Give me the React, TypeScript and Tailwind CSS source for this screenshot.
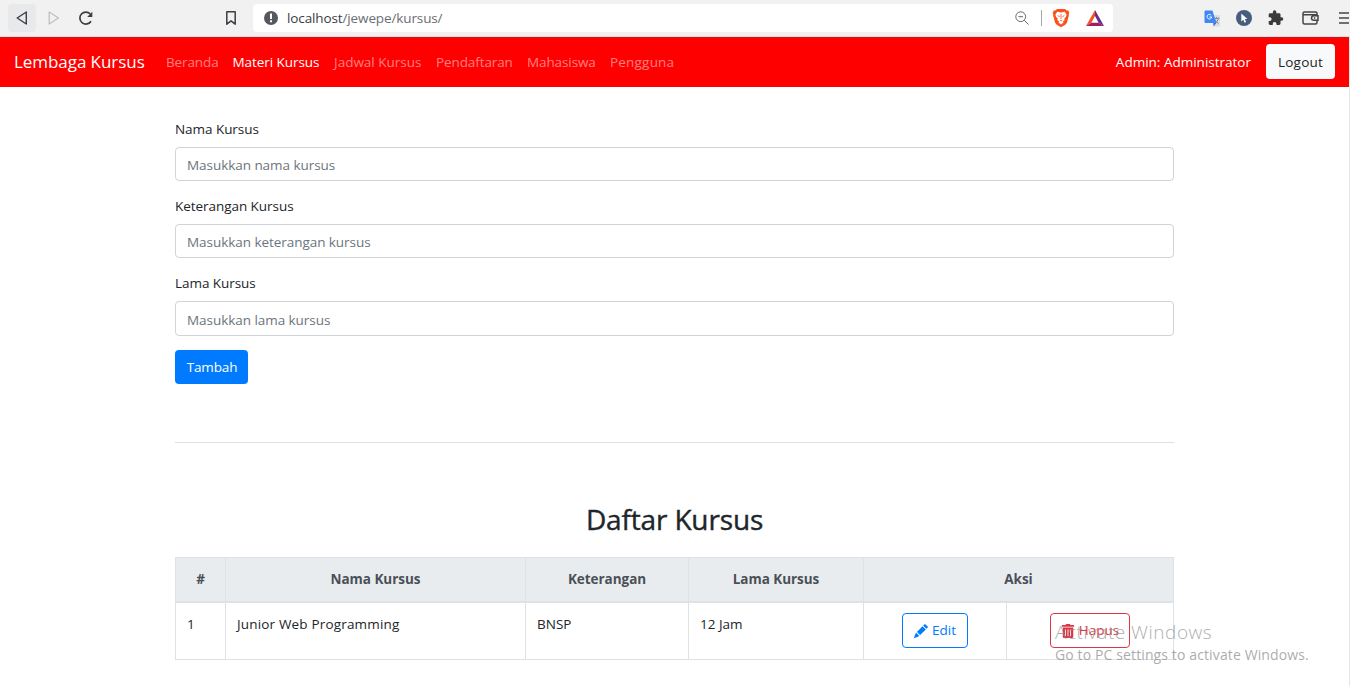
import React from "react";
import { BsPencilFill } from "react-icons/bs";
import { FaTrashAlt } from "react-icons/fa";

function BrowserBar() {
  return (
    <header className="flex h-[37px] items-start border-b border-[#e6dcdc] bg-[#f1f1f1] pt-1">
      <div className="ml-2 flex h-7 w-7 items-center justify-center rounded bg-[#e8e9eb]">
        <svg width="16" height="16" viewBox="0 0 16 16" fill="none" stroke="#3b3e44" strokeWidth="1.4" strokeLinejoin="round"><path d="M12.3 2v12L3.2 8z" /></svg>
      </div>
      <div className="ml-1 flex h-7 w-7 items-center justify-center">
        <svg width="16" height="16" viewBox="0 0 16 16" fill="none" stroke="#bfc0c2" strokeWidth="1.3" strokeLinejoin="round"><path d="M3.2 2v12l9.3-6z" /></svg>
      </div>
      <div className="ml-1 flex h-7 w-7 items-center justify-center">
        <svg width="16" height="16" viewBox="0 0 16 16" fill="none" stroke="#3b3e44" strokeWidth="1.7"><path d="M13 11.2A6 6 0 1 1 12.3 4" /><path d="M14.3 1.8v5.1H9.2z" fill="#3b3e44" stroke="none" /></svg>
      </div>
      <div className="ml-[117px] flex h-7 w-7 items-center justify-center">
        <svg width="16" height="16" viewBox="0 0 16 16" fill="none" stroke="#3b3e44" strokeWidth="1.5" strokeLinejoin="round"><path d="M3.8 1.8h8.4v12.4L8 10.9l-4.2 3.3z" /></svg>
      </div>
      <div className="ml-2 flex h-7 w-[860px] items-center rounded bg-white">
        <svg className="ml-[11px]" width="14" height="14" viewBox="0 0 14 14"><circle cx="7" cy="7" r="7" fill="#55585d" /><path d="M6 2.6h2v5.4H6zM6 9.3h2v2H6z" fill="#fff" /></svg>
        <span className="ml-[9px] text-[13.5px] leading-5 tracking-[-0.12px] text-[#6b6e73]"><span className="text-[#3b3e44]">localhost</span>/jewepe/kursus/</span>
        <svg className="ml-auto" width="14" height="14" viewBox="0 0 14 14" fill="none" stroke="#65686d" strokeWidth="1"><circle cx="5.7" cy="5.7" r="4.9" /><path d="M9.3 9.3l4.2 4.2M3.4 5.7H8" /></svg>
        <div className="ml-3 h-4 w-px bg-[#a5a7ab]" />
        <svg className="ml-[10px]" width="18" height="20" viewBox="0 0 18 20"><path d="M5 1h8l1.7 1.6 1.6-.2 1 2.6-.6 1.5.2 1-2 7.3-1.6 2L9 19.3 4.7 16.800l-1.600-2-2-7.300.200-1L.7 5l1-2.600 1.600.200z" fill="#f9531d" /><path d="M5.300 3.800L9 4.500l3.700-.7 1.900 3-.8 2.200-1.500 1.600.4 1.400-1.800 1.200.6 1.300L9 16.400l-2.500-1.900.600-1.300L5.300 12l.4-1.400L4.200 9l-.8-2.200z" fill="#fff" /><path d="M5 7.200l2.900.8-.7 1.100zM13 7.200l-2.900.8.7 1.100zM7.300 11.500L9 12.300l1.700-.8L9 13.400zM8.600 6h.8v5h-.8z" fill="#f9531d" /></svg>
        <svg className="ml-4 mr-[9px]" width="18" height="16" viewBox="0 0 18 16"><path d="M9 0L0 16l5.400-3.300L9 6z" fill="#f9531d" /><path d="M0 16h18l-5.400-3.300H5.400z" fill="#9e1f63" /><path d="M9 0v6l3.600 6.700L18 16z" fill="#662d91" /></svg>
      </div>
      <div className="ml-[91px] flex h-7 items-center">
        <svg width="17" height="17" viewBox="0 0 17 17"><path d="M5.500 5H15a1 1 0 0 1 1 1v9.500a1 1 0 0 1-1 1H9.500z" fill="#dadde2" /><path d="M9.700 8.300h5.800M12.500 7v1.300M14.500 8.500q-1 3.500-4 5M11 9.500q1 2.500 3.500 4" stroke="#7c8793" fill="none" /><path d="M1.500.5h7L12.300 13h-10.800a1 1 0 0 1-1-1V1.500a1 1 0 0 1 1-1z" fill="#4285f4" /><path d="M9.500 13h2.800l-2.800 3.500z" fill="#3367d6" /><path d="M7.200 5.200A2.300 2.300 0 1 0 7.700 7H5.500" stroke="#fff" fill="none" /></svg>
        <svg className="ml-[15px]" width="16" height="16" viewBox="0 0 16 16"><circle cx="8" cy="8" r="8" fill="#475d7c" /><path d="M5.300 3.500v8l2-1.800 1.300 3 1.500-.7-1.300-2.900h2.600z" fill="#fff" /></svg>
        <svg className="ml-4" width="16" height="16" viewBox="1 1 23 22" fill="#3b3b3d"><path d="M20.500 11H19V7c0-1.100-.9-2-2-2h-4V3.500a2.500 2.500 0 0 0-5 0V5H4c-1.100 0-2 .9-2 2v3.800h1.500a2.700 2.700 0 0 1 0 5.400H2V20c0 1.100.9 2 2 2h3.800v-1.500a2.700 2.700 0 0 1 5.400 0V22H17c1.100 0 2-.9 2-2v-4h1.500a2.500 2.500 0 0 0 0-5z" /></svg>
        <svg className="ml-[18px]" width="17" height="14" viewBox="0 0 17 14" fill="none" stroke="#444548" strokeWidth="1.500"><path d="M15 4V2.500a1.500 1.500 0 0 0-1.500-1.500h-11A1.500 1.500 0 0 0 1 2.500v9A1.500 1.500 0 0 0 2.500 13h11a1.500 1.500 0 0 0 1.500-1.500V10M1 3.700h14M16 4.700v4.600h-4.200a2.300 2.300 0 0 1 0-4.600z" /><path d="M11.800 7h1.500" /></svg>
        <svg className="ml-5" width="10" height="12" viewBox="0 0 10 12" fill="none" stroke="#444548" strokeWidth="1.600"><path d="M0 1h10M0 6h10M0 11h10" /></svg>
      </div>
    </header>
  );
}

const links = [
  { label: "Beranda", cls: "w-[66.5px] text-white/50 tracking-[-0.12px]" },
  { label: "Materi Kursus", cls: "w-[101.5px] text-white tracking-[-0.06px]" },
  { label: "Jadwal Kursus", cls: "w-[102px] text-white/50" },
  { label: "Pendaftaran", cls: "w-[91px] text-white/50 tracking-[-0.1px]" },
  { label: "Mahasiswa", cls: "w-[83px] text-white/50 tracking-[-0.1px]" },
  { label: "Pengguna", cls: "w-[80px] text-white/50 tracking-[0.2px]" },
];

function Navbar() {
  return (
    <nav className="flex h-[50px] w-[1349px] items-center border-t border-[#d51515] bg-[#ff0000] pb-px text-[13.5px]">
      <a className="ml-[14px] w-[152px] whitespace-nowrap text-[17px] tracking-[-0.06px] text-white">Lembaga Kursus</a>
      {links.map((l) => (
        <a key={l.label} className={"whitespace-nowrap " + l.cls}>{l.label}</a>
      ))}
      <span className="ml-auto mr-[15px] whitespace-nowrap text-white">Admin: Administrator</span>
      <button className="mr-[14px] mb-px h-[35px] w-[69px] rounded-[4px] bg-[#f8f9fa] pt-px text-[#212529] tracking-[0.2px]">Logout</button>
    </nav>
  );
}

const fields = [
  { label: "Nama Kursus", placeholder: "Masukkan nama kursus", gap: "mb-[14px]", input: "h-[34px] pt-[2px]" },
  { label: "Keterangan Kursus", placeholder: "Masukkan keterangan kursus", gap: "mb-[14px]", input: "h-[34px] pt-[2px]" },
  { label: "Lama Kursus", placeholder: "Masukkan lama kursus", gap: "mb-[14px]", input: "h-[35px] pt-[3px]" },
];

function CourseForm() {
  return (
    <form className="flex flex-col items-start">
      {fields.map((f) => (
        <div key={f.label} className={"w-full tracking-[-0.05px] " + f.gap}>
          <label className="mb-[7px] block h-[22px] pt-px leading-[21.6px]">{f.label}</label>
          <input placeholder={f.placeholder} className={"block w-full rounded-[4px] border border-[#ced4da] bg-white px-[11px] placeholder:text-[#6c757d] placeholder:opacity-100 " + f.input} />
        </div>
      ))}
      <button type="button" className="h-[34px] w-[73px] rounded-[4px] bg-[#007bff] pl-px text-white tracking-[-0.15px]">Tambah</button>
    </form>
  );
}

const cell = "border border-[#dee2e6] px-[11px] ";
const headCell = cell + "border-b-2 pb-px tracking-[-0.04px]";

function CourseTable() {
  return (
    <table className="w-[999px] table-fixed border-collapse">
      <colgroup>
        <col className="w-[50px]" /><col className="w-[300px]" /><col className="w-[163px]" />
        <col className="w-[175px]" /><col className="w-[143px]" /><col className="w-[167px]" />
      </colgroup>
      <thead>
        <tr className="h-[44px] bg-[#e9ecef] text-center font-bold text-[#495057]">
          <th className={headCell}>#</th>
          <th className={headCell}>Nama Kursus</th>
          <th className={headCell}>Keterangan</th>
          <th className={headCell}>Lama Kursus</th>
          <th colSpan={2} className={headCell}>Aksi</th>
        </tr>
      </thead>
      <tbody>
        <tr className="h-[58px] align-top leading-[21.6px]">
          <td className={cell + "pt-[11px]"}>1</td>
          <td className={cell + "pt-[11px] tracking-[0.17px]"}>Junior Web Programming</td>
          <td className={cell + "pt-[11px]"}>BNSP</td>
          <td className={cell + "pt-[11px]"}>12 Jam</td>
          <td className={cell + "pt-[10px]"}>
            <button className="mx-auto flex h-[35px] w-[66px] items-center justify-center gap-1 rounded-[4px] border border-[#007bff] pt-px text-[#007bff]"><BsPencilFill size={14} /><span className="pt-px">Edit</span></button>
          </td>
          <td className={cell + "pt-[10px]"}>
            <button className="mx-auto flex h-[35px] w-[80px] items-center justify-center gap-1 rounded-[4px] border border-[#dc3545] pt-px text-[#dc3545]"><FaTrashAlt size={14} /><span className="pt-px">Hapus</span></button>
          </td>
        </tr>
      </tbody>
    </table>
  );
}

export default function App() {
  return (
    <div className="relative h-[686px] w-[1350px] overflow-hidden bg-white font-['Open_Sans','Noto_Sans',sans-serif] text-[13.5px] text-[#212529]">
      <BrowserBar />
      <div className="h-[649px] border-r border-[#e4e6e8]">
        <Navbar />
        <main className="ml-[175px] w-[999px] pt-[31px]">
          <CourseForm />
          <hr className="mt-[58px] border-[#dfdfdf]" />
          <h2 className="mt-[58px] mb-[19px] text-center text-[28px] leading-[37px] font-medium tracking-[-0.15px] [-webkit-text-stroke:0.4px_#212529]">Daftar Kursus</h2>
          <CourseTable />
        </main>
      </div>
      <div className="pointer-events-none absolute top-[619px] left-[1055px] whitespace-nowrap text-[#8f8f8f]/75">
        <p className="text-[19px] leading-[26px] font-light tracking-[0.5px]">Activate Windows</p>
        <p className="text-[14px] leading-[19px] tracking-[0.12px]">Go to PC settings to activate Windows.</p>
      </div>
    </div>
  );
}
